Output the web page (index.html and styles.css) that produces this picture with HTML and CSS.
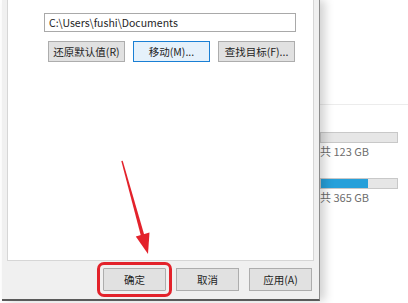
FILE: index.html
```html
<!DOCTYPE html>
<html lang="zh-CN">
<head>
    <meta charset="UTF-8">
    <title>文档 属性</title>
    <link rel="stylesheet" href="styles.css">
</head>
<body>

    <div class="screen">
        <!-- Properties dialog, location tab -->
        <div class="dialog">
            <div class="panel">
                <div class="path">C:\Users\fushi\Documents</div>
                <div class="actions">
                    <button class="btn">还原默认值(R)</button>
                    <button class="btn focused">移动(M)...</button>
                    <button class="btn">查找目标(F)...</button>
                </div>
            </div>
            <div class="footer">
                <button class="btn wide marked">确定</button>
                <button class="btn wide">取消</button>
                <button class="btn wide">应用(A)</button>
            </div>
        </div>

        <!-- This PC window behind the dialog -->
        <div class="behind">
            <div class="rule"></div>
            <div class="drive">
                <div class="bar"><div class="fill" style="width: 0%"></div></div>
                <div class="size">共 123 GB</div>
            </div>
            <div class="drive">
                <div class="bar"><div class="fill" style="width: 62%"></div></div>
                <div class="size">共 365 GB</div>
            </div>
        </div>

        <!-- red annotation arrow -->
        <svg class="arrow" width="408" height="303" viewBox="0 0 408 303">
            <polygon points="121.3,161 122.7,160.7 144.6,236 141.2,237" fill="#e3222b"/>
            <polygon points="148,254 135.8,236.4 149.5,232.6" fill="#e3222b"/>
        </svg>
    </div>

</body>
</html>
```

FILE: styles.css
```css
body { margin: 0; background: #fff; font-family: "Noto Sans CJK SC", "Noto Sans", sans-serif; font-size: 11px; color: #1e1e1e; overflow: hidden; }
.screen { position: relative; display: flex; height: 303px; width: 408px; }

.dialog { position: relative; z-index: 2; display: flex; flex-direction: column; width: 318px; height: 301px; margin-left: 2px; box-sizing: border-box; padding-left: 5px; background: #f0f0f0; border-right: 1px solid #8c8c8c; border-bottom: 2px solid #5a5a5a; box-shadow: 5px 0 9px rgba(0, 0, 0, 0.18); }
.panel { height: 261px; margin-right: 5px; box-sizing: border-box; padding: 13px 17px 0 36px; background: #fff; border: 1px solid #d6d6d6; border-top: none; }

.path { height: 19px; line-height: 17px; padding-left: 4px; box-sizing: border-box; border: 1px solid #a9a9a9; font-size: 10.5px; }
.actions { display: flex; gap: 8px; margin-top: 9px; padding-left: 4px; }

.btn { height: 21px; padding: 0; font: inherit; font-size: 10.5px; color: #1e1e1e; background: #e1e1e1; border: 1px solid #adadad; }
.actions .btn { width: 77px; }
.btn.focused { background: #e5f1fb; border-color: #1a7fd4; }

.footer { display: flex; justify-content: flex-end; gap: 10px; padding: 7px 7px 0 0; }
.btn.wide { width: 63px; height: 23px; }
.btn.marked { outline: 3px solid #e3222b; outline-offset: 3px; border-radius: 1px; }

.behind { flex: 1; padding-top: 104px; background: #fff; }
.rule { height: 1px; background: #ececec; margin-bottom: 27px; }
.drive { height: 46px; }
.bar { width: 78px; height: 11px; box-sizing: border-box; background: #e6e6e6; border: 1px solid #c8c8c8; }
.fill { height: 100%; background: #26a0da; }
.size { margin-top: 0; font-size: 11px; color: #6d6d6d; font-family: "Noto Sans CJK SC", sans-serif; }

.arrow { position: absolute; left: 0; top: 0; z-index: 3; pointer-events: none; }
```
